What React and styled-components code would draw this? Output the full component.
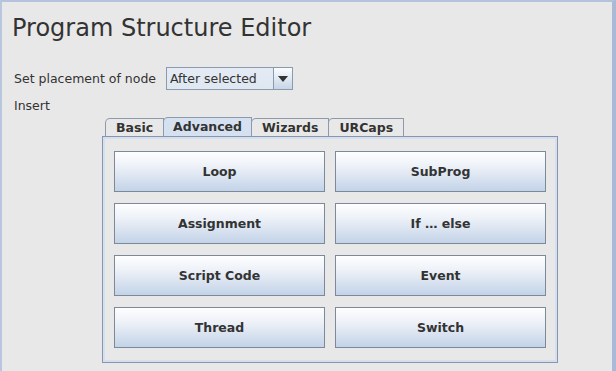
import React from "react";
import styled, { createGlobalStyle } from "styled-components";

const GlobalStyle = createGlobalStyle`
  html, body {
    margin: 0;
    padding: 0;
    background: #e8e8e8;
  }
  body {
    font-family: "DejaVu Sans", "Liberation Sans", sans-serif;
    color: #333;
  }
`;

const Frame = styled.div`
  width: 616px;
  height: 371px;
  box-sizing: border-box;
  background: #e8e8e8;
  border-top: 2px solid #b4c3dc;
  border-left: 2px solid #b8c6de;
  border-right: 4px solid #a9b9d6;
  overflow: hidden;
  padding: 11px 0 0 10px;
`;

const Title = styled.h1`
  margin: 0;
  font-size: 24px;
  font-weight: normal;
  color: #333;
  line-height: 30px;
`;

const PlacementRow = styled.div`
  display: flex;
  align-items: center;
  margin: 24px 0 0 2px;
  font-size: 12.5px;
  gap: 10px;
`;

const Combo = styled.div`
  display: flex;
  width: 127px;
  height: 23px;
  box-sizing: border-box;
  border: 1px solid #8a9bb0;
  background: linear-gradient(#e4ebf4, #dfe7f1);
`;

const ComboText = styled.div`
  flex: 1;
  font-size: 12.5px;
  line-height: 21px;
  padding-left: 3px;
  color: #333;
`;

const ComboArrow = styled.div`
  width: 18px;
  border-left: 1px solid #8a9bb0;
  background: linear-gradient(#fbfcfe, #c6d5e8);
  display: flex;
  align-items: center;
  justify-content: center;
`;

const InsertLabel = styled.div`
  font-size: 12.5px;
  margin: 8px 0 0 2px;
`;

const TabArea = styled.div`
  margin: 4px 0 0 90px;
  width: 456px;
`;

const TabRow = styled.div`
  display: flex;
  padding-left: 3px;
  height: 19px;
  align-items: flex-end;
`;

const Tab = styled.div`
  height: ${p => (p.$active ? 19 : 18)}px;
  box-sizing: border-box;
  padding: 0 ${p => p.$pad}px;
  font-size: 12.5px;
  font-weight: bold;
  color: #333;
  line-height: 17px;
  border: 1px solid #8d9aab;
  border-bottom: none;
  margin-right: -1px;
  border-top-left-radius: 5px 5px;
  background: ${p => (p.$active ? "#d5e1f0" : "#e8e8e8")};
`;

const Panel = styled.div`
  border: 1px solid #8795ad;
  box-shadow: inset 0 0 0 2px #d4e0ef;
  padding: 14px 11px 14px 11px;
  display: grid;
  grid-template-columns: 1fr 1fr;
  column-gap: 10px;
  row-gap: 11px;
`;

const Button = styled.div`
  height: 41px;
  box-sizing: border-box;
  border: 1px solid #7d8998;
  background: linear-gradient(#fdfeff 0%, #eef2f8 35%, #c3d3e8 100%);
  display: flex;
  align-items: center;
  justify-content: center;
  font-size: 12.5px;
  font-weight: bold;
  color: #333;
`;

const buttons = [
  "Loop",
  "SubProg",
  "Assignment",
  "If … else",
  "Script Code",
  "Event",
  "Thread",
  "Switch",
];

const tabs = [
  { label: "Basic", pad: 10 },
  { label: "Advanced", pad: 9, active: true },
  { label: "Wizards", pad: 10 },
  { label: "URCaps", pad: 10 },
];

export default function App() {
  return (
    <>
      <GlobalStyle />
      <Frame>
        <Title>Program Structure Editor</Title>
        <PlacementRow>
          <span>Set placement of node</span>
          <Combo>
            <ComboText>After selected</ComboText>
            <ComboArrow>
              <svg width="10" height="6" viewBox="0 0 10 6">
                <path d="M0 0 L10 0 L5 6 Z" fill="#333" />
              </svg>
            </ComboArrow>
          </Combo>
        </PlacementRow>
        <InsertLabel>Insert</InsertLabel>
        <TabArea>
          <TabRow>
            {tabs.map(t => (
              <Tab key={t.label} $active={t.active} $pad={t.pad}>
                {t.label}
              </Tab>
            ))}
          </TabRow>
          <Panel>
            {buttons.map(b => (
              <Button key={b}>{b}</Button>
            ))}
          </Panel>
        </TabArea>
      </Frame>
    </>
  );
}
